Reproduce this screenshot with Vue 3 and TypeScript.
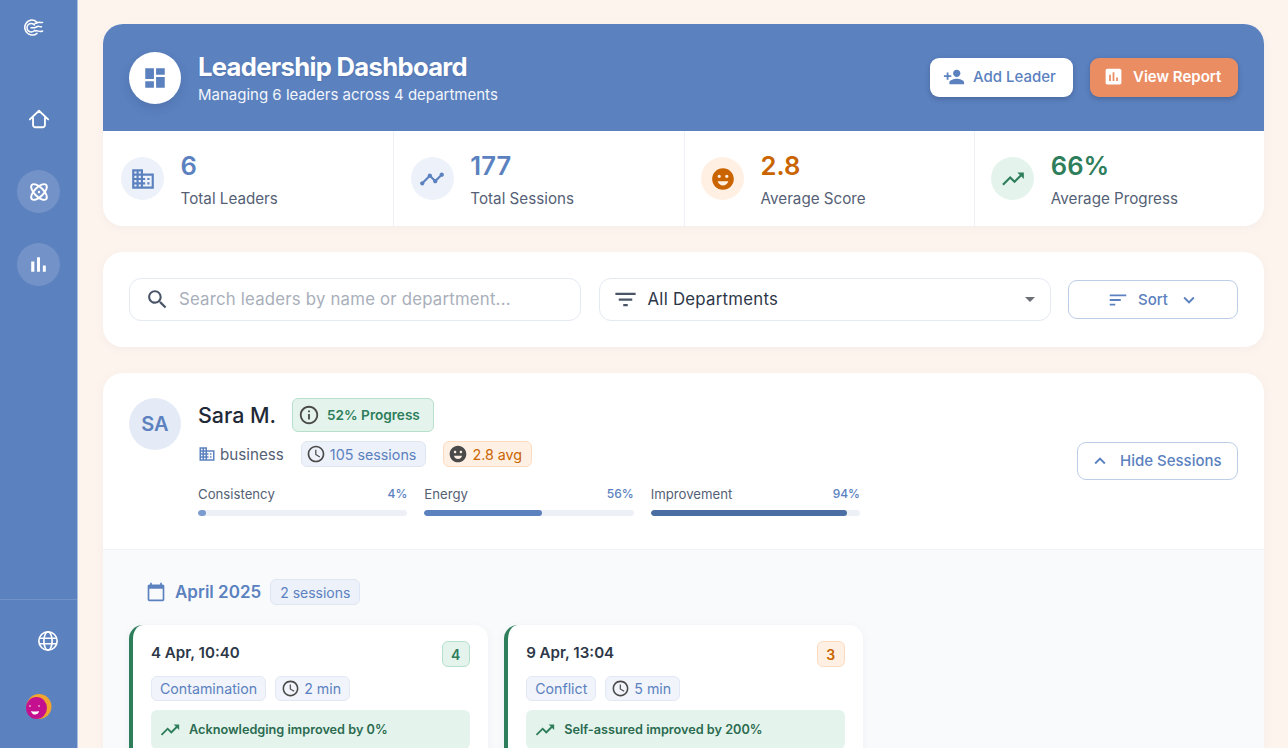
<script setup lang="ts">
const I = {
  dashboard: 'M3 13h8V3H3v10zm0 8h8v-6H3v6zm10 0h8V11h-8v10zm0-18v6h8V3h-8z',
  business: 'M12 7V3H2v18h20V7H12zM6 19H4v-2h2v2zm0-4H4v-2h2v2zm0-4H4V9h2v2zm0-4H4V5h2v2zm4 12H8v-2h2v2zm0-4H8v-2h2v2zm0-4H8V9h2v2zm0-4H8V5h2v2zm10 12h-8v-2h2v-2h-2v-2h2v-2h-2V9h8v10zm-2-8h-2v2h2v-2zm0 4h-2v2h2v-2z',
  timeline: 'M23 8c0 1.1-.9 2-2 2-.18 0-.35-.02-.51-.07l-3.56 3.55c.05.16.07.34.07.52 0 1.1-.9 2-2 2s-2-.9-2-2c0-.18.02-.36.07-.52l-2.55-2.55c-.16.05-.34.07-.52.07s-.36-.02-.52-.07l-4.55 4.56c.05.16.07.33.07.51 0 1.1-.9 2-2 2s-2-.9-2-2 .9-2 2-2c.18 0 .35.02.51.07l4.56-4.55C8.02 9.36 8 9.18 8 9c0-1.1.9-2 2-2s2 .9 2 2c0 .18-.02.36-.07.52l2.55 2.55c.16-.05.34-.07.52-.07s.36.02.52.07l3.55-3.56C19.02 8.35 19 8.18 19 8c0-1.1.9-2 2-2s2 .9 2 2z',
  mood: 'M11.99 2C6.47 2 2 6.48 2 12s4.47 10 9.99 10C17.52 22 22 17.52 22 12S17.52 2 11.99 2zM8.5 8c.83 0 1.5.67 1.5 1.5S9.33 11 8.5 11 7 10.33 7 9.5 7.67 8 8.5 8zM12 18c-2.28 0-4.22-1.66-5-4h10c-.78 2.34-2.72 4-5 4zm3.5-7c-.83 0-1.5-.67-1.5-1.5S14.67 8 15.5 8s1.5.67 1.5 1.5-.67 1.5-1.5 1.5z',
  trend: 'M16 6l2.29 2.29-4.88 4.88-4-4L2 16.59 3.41 18l6-6 4 4 6.3-6.29L22 12V6z',
  personAdd: 'M15 12c2.21 0 4-1.79 4-4s-1.79-4-4-4-4 1.79-4 4 1.79 4 4 4zm-9-2V7H4v3H1v2h3v3h2v-3h3v-2H6zm9 4c-2.67 0-8 1.34-8 4v2h16v-2c0-2.66-5.33-4-8-4z',
  assessment: 'M19 3H5c-1.1 0-2 .9-2 2v14c0 1.1.9 2 2 2h14c1.1 0 2-.9 2-2V5c0-1.1-.9-2-2-2zM9 17H7v-7h2v7zm4 0h-2V7h2v10zm4 0h-2v-4h2v4z',
  search: 'M15.5 14h-.79l-.28-.27C15.41 12.59 16 11.11 16 9.5 16 5.91 13.09 3 9.5 3S3 5.91 3 9.5 5.91 16 9.5 16c1.61 0 3.09-.59 4.23-1.57l.27.28v.79l5 4.99L20.49 19l-4.99-5zm-6 0C7.01 14 5 11.99 5 9.5S7.01 5 9.5 5 14 7.01 14 9.5 11.99 14 9.5 14z',
  filter: 'M10 18h4v-2h-4v2zM3 6v2h18V6H3zm3 7h12v-2H6v2z',
  sort: 'M3 18h6v-2H3v2zM3 6v2h18V6H3zm0 7h12v-2H3v2z',
  more: 'M16.59 8.59L12 13.17 7.41 8.59 6 10l6 6 6-6z',
  less: 'M12 8l-6 6 1.41 1.41L12 10.83l4.59 4.58L18 14z',
  info: 'M11 7h2v2h-2zm0 4h2v6h-2zm1-9C6.48 2 2 6.48 2 12s4.48 10 10 10 10-4.48 10-10S17.52 2 12 2zm0 18c-4.41 0-8-3.59-8-8s3.59-8 8-8 8 3.59 8 8-3.59 8-8 8z',
  clock: 'M11.99 2C6.47 2 2 6.48 2 12s4.47 10 9.99 10C17.52 22 22 17.52 22 12S17.52 2 11.99 2zM12 20c-4.42 0-8-3.58-8-8s3.58-8 8-8 8 3.58 8 8-3.58 8-8 8zm.5-13H11v6l5.25 3.15.75-1.23-4.5-2.67z',
  calendar: 'M20 3h-1V1h-2v2H7V1H5v2H4c-1.1 0-2 .9-2 2v16c0 1.1.9 2 2 2h16c1.1 0 2-.9 2-2V5c0-1.1-.9-2-2-2zm0 18H4V8h16v13z',
  bars: 'M5 9.2h3V19H5zM10.6 5h2.8v14h-2.8zm5.6 8H19v6h-2.8z',
}

const stats = [
  { value: '6', label: 'Total Leaders', icon: I.business, tone: 'blue' },
  { value: '177', label: 'Total Sessions', icon: I.timeline, tone: 'blue' },
  { value: '2.8', label: 'Average Score', icon: I.mood, tone: 'orange' },
  { value: '66%', label: 'Average Progress', icon: I.trend, tone: 'green' },
]

const metrics = [
  { label: 'Consistency', value: 4, color: '#7c9ccf' },
  { label: 'Energy', value: 56, color: '#5b81bf' },
  { label: 'Improvement', value: 94, color: '#4a6ea3' },
]

const sessions = [
  { date: '4 Apr, 10:40', score: 4, tone: 'green', topic: 'Contamination', time: '2 min', note: 'Acknowledging improved by 0%' },
  { date: '9 Apr, 13:04', score: 3, tone: 'orange', topic: 'Conflict', time: '5 min', note: 'Self-assured improved by 200%' },
]
</script>

<template>
  <div class="app">
    <aside class="sidebar">
      <svg class="logo" viewBox="0 0 22 18" fill="none" stroke="#fff" stroke-width="1.5" stroke-linecap="round">
        <path d="M14 3.2A7.6 7.6 0 0 0 8.5 1 7.5 7.5 0 1 0 14 14.3" />
        <path d="M11.6 6A4.3 4.3 0 1 0 11.6 11.4" />
        <path d="M8 8.7h3.5c1.5 0 2.2-1.4 3.7-1.4s2 .8 3.3.4" />
        <path d="M12 4.2c1.500.6 2.400-1 4-1 1.400 0 2 .8 3.600.2" />
        <path d="M12 12c1.500-.6 2.400-.3 3.500.1 1.600.6 2.600.6 4.100-.1" />
      </svg>
      <nav class="nav">
        <span class="nav-item">
          <svg class="home" viewBox="0 0 24 24" fill="none" stroke="#fff" stroke-width="2" stroke-linejoin="round" stroke-linecap="round">
            <path d="M2 12.500 12 3l10 9.500M5.500 10.500V18.500a2.500 2.500 0 0 0 2.500 2.500h8a2.500 2.500 0 0 0 2.500-2.500v-8" />
          </svg>
        </span>
        <span class="nav-item active">
          <svg class="atom" viewBox="0 0 24 24" fill="none" stroke="#fff" stroke-width="2.1">
            <ellipse cx="12" cy="12" rx="11" ry="5" transform="rotate(45 12 12)" />
            <ellipse cx="12" cy="12" rx="11" ry="5" transform="rotate(-45 12 12)" />
            <circle cx="12" cy="12" r="1.300" fill="#fff" stroke="none" />
          </svg>
        </span>
        <span class="nav-item active">
          <svg class="bars" viewBox="0 0 24 24" fill="#fff"><path :d="I.bars" /></svg>
        </span>
      </nav>
      <div class="side-foot">
        <svg class="globe" viewBox="0 0 24 24" fill="none" stroke="#fff" stroke-width="1.800">
          <circle cx="12" cy="12" r="10" />
          <ellipse cx="12" cy="12" rx="4.500" ry="10" />
          <path d="M2.500 9h19M2.500 15h19" />
        </svg>
        <svg class="user" viewBox="0 0 26 26">
          <circle cx="13" cy="12.500" r="12.500" fill="#f2a52e" />
          <ellipse cx="10.500" cy="14" rx="10.500" ry="11" fill="#c4108e" />
          <circle cx="4" cy="12" r="0.800" fill="#fff" />
          <circle cx="13" cy="12" r="0.800" fill="#fff" />
          <path d="M5 17c2.500.8 5 .8 8 0-.6 4.600-7 5-8 0z" fill="#fff" />
        </svg>
      </div>
    </aside>

    <main class="main">
      <section class="overview">
        <header class="banner">
          <div class="banner-left">
            <span class="banner-icon">
              <svg viewBox="0 0 24 24" fill="#5b81bf"><path :d="I.dashboard" /></svg>
            </span>
            <div>
              <h1>Leadership Dashboard</h1>
              <p>Managing 6 leaders across 4 departments</p>
            </div>
          </div>
          <div class="banner-actions">
            <button class="btn-white">
              <svg viewBox="0 0 24 24" fill="#5b81bf"><path :d="I.personAdd" /></svg>
              Add Leader
            </button>
            <button class="btn-orange">
              <svg viewBox="0 0 24 24" fill="#fff"><path :d="I.assessment" /></svg>
              View Report
            </button>
          </div>
        </header>
        <div class="stats">
          <div v-for="s in stats" :key="s.label" class="stat" :class="s.tone">
            <span class="stat-icon">
              <svg viewBox="0 0 24 24" fill="currentColor"><path :d="s.icon" /></svg>
            </span>
            <div>
              <div class="stat-value">{{ s.value }}</div>
              <div class="stat-label">{{ s.label }}</div>
            </div>
          </div>
        </div>
      </section>

      <section class="filters">
        <div class="field search-field">
          <svg viewBox="0 0 24 24" fill="#4a5568"><path :d="I.search" /></svg>
          <span class="placeholder">Search leaders by name or department...</span>
        </div>
        <div class="field select-field">
          <svg viewBox="0 0 24 24" fill="#4a5568"><path :d="I.filter" /></svg>
          <span class="select-value">All Departments</span>
          <span class="caret"></span>
        </div>
        <button class="btn-outline sort">
          <svg viewBox="0 0 24 24" fill="#5b81bf" class="i22"><path :d="I.sort" /></svg>
          Sort
          <svg viewBox="0 0 24 24" fill="#5b81bf" class="i22 chev"><path :d="I.more" /></svg>
        </button>
      </section>

      <section class="leader">
        <div class="leader-head">
          <span class="avatar">SA</span>
          <div class="leader-info">
            <div class="name-row">
              <h2>Sara M.</h2>
              <span class="progress-badge">
                <svg viewBox="0 0 24 24" fill="#4a4a4a"><path :d="I.info" /></svg>
                52% Progress
              </span>
            </div>
            <div class="meta-row">
              <span class="dept">
                <svg viewBox="0 0 24 24" fill="#5b81bf"><path :d="I.business" /></svg>
                business
              </span>
              <span class="chip chip-blue">
                <svg viewBox="0 0 24 24" fill="#4a4a4a"><path :d="I.clock" /></svg>
                105 sessions
              </span>
              <span class="chip chip-orange">
                <svg viewBox="0 0 24 24" fill="#4a4a4a"><path :d="I.mood" /></svg>
                2.8 avg
              </span>
            </div>
            <div class="metrics">
              <div v-for="m in metrics" :key="m.label" class="metric">
                <div class="metric-top">
                  <span>{{ m.label }}</span>
                  <b>{{ m.value }}%</b>
                </div>
                <div class="track">
                  <div class="fill" :style="{ width: m.value + '%', background: m.color }"></div>
                </div>
              </div>
            </div>
          </div>
          <button class="btn-outline hide">
            <svg viewBox="0 0 24 24" fill="#5b81bf" class="i22"><path :d="I.less" /></svg>
            Hide Sessions
          </button>
        </div>

        <div class="sessions">
          <div class="month">
            <svg viewBox="0 0 24 24" fill="#5b81bf"><path :d="I.calendar" /></svg>
            <span class="month-name">April 2025</span>
            <span class="month-count">2 sessions</span>
          </div>
          <div class="session-grid">
            <article v-for="s in sessions" :key="s.date" class="session">
              <div class="session-top">
                <span class="session-date">{{ s.date }}</span>
                <span class="score" :class="s.tone">{{ s.score }}</span>
              </div>
              <div class="session-tags">
                <span class="tag">{{ s.topic }}</span>
                <span class="tag">
                  <svg viewBox="0 0 24 24" fill="#4a4a4a"><path :d="I.clock" /></svg>
                  {{ s.time }}
                </span>
              </div>
              <div class="note">
                <svg viewBox="0 0 24 24" fill="#2e7d5b"><path :d="I.trend" /></svg>
                {{ s.note }}
              </div>
            </article>
          </div>
        </div>
      </section>
    </main>
  </div>
</template>

<style>
html, body { margin: 0; height: 100%; overflow: hidden; }
</style>

<style scoped>
* { box-sizing: border-box; }
.app {
  display: flex;
  height: 748px;
  overflow: hidden;
  background: #fdf4ee;
  font-family: Inter, "Liberation Sans", sans-serif;
  color: #2d3748;
}
svg { display: block; flex: none; }
button { font-family: inherit; cursor: pointer; }

.sidebar {
  flex: none;
  width: 78px;
  background: #5b81bf;
  border-right: 1px solid #a9bfdf;
  display: flex;
  flex-direction: column;
}
.logo { width: 22px; height: 18px; margin: 19px 0 0 23px; }
.nav {
  flex: 1;
  display: flex;
  flex-direction: column;
  gap: 30px;
  margin-top: 60px;
  padding-left: 17px;
}
.nav-item {
  width: 43px;
  height: 43px;
  border-radius: 50%;
  display: flex;
  align-items: center;
  justify-content: center;
}
.nav-item.active { background: rgba(255, 255, 255, 0.15); }
.home { width: 22px; height: 22px; }
.atom { width: 22px; height: 22px; }
.bars { width: 25px; height: 25px; }
.side-foot {
  height: 149px;
  border-top: 1px solid rgba(255, 255, 255, 0.14);
  padding: 30px 0 0 37px;
}
.globe { width: 22px; height: 22px; }
.user { width: 26px; height: 26px; margin: 42px 0 0 -11px; }

.main {
  flex: 1;
  min-width: 0;
  padding: 24px 24px 0 25px;
  display: flex;
  flex-direction: column;
  gap: 26px;
}
.overview, .filters, .leader {
  background: #fff;
  border-radius: 20px;
  box-shadow: 0 2px 10px rgba(90, 100, 130, 0.05);
  flex: none;
}
.overview { overflow: hidden; }
.banner {
  height: 107px;
  background: #5b81bf;
  padding: 0 26px;
  display: flex;
  align-items: center;
  justify-content: space-between;
  color: #fff;
}
.banner-left { display: flex; align-items: center; gap: 17px; }
.banner-icon {
  width: 52px;
  height: 52px;
  border-radius: 50%;
  background: #fff;
  display: flex;
  align-items: center;
  justify-content: center;
  box-shadow: 0 4px 10px rgba(40, 60, 100, 0.18);
}
.banner-icon svg { width: 26px; height: 26px; }
h1 {
  margin: 0;
  font-size: 25.6px;
  line-height: 32px;
  font-weight: 700;
  letter-spacing: -0.68px;
  text-shadow: 0 1px 2px rgba(30, 40, 70, 0.15);
}
.banner p { margin: 3px 0 0; font-size: 15px; line-height: 18px; color: #f2f5fb; }
.banner-actions { display: flex; gap: 17px; }
.btn-white, .btn-orange {
  height: 39px;
  border: none;
  border-radius: 9px;
  display: flex;
  align-items: center;
  gap: 8px;
  font-size: 15px;
  font-weight: 500;
  box-shadow: 0 2px 5px rgba(30, 40, 70, 0.28);
}
.btn-white { width: 143px; padding: 0 0 2px 13px; background: #fff; color: #5b81bf; }
.btn-white svg { width: 22px; height: 22px; }
.btn-orange { width: 148px; padding: 0 0 2px 13px; background: #ea8d63; color: #fff; gap: 9px; font-weight: 600; }
.btn-orange svg { width: 21px; height: 21px; }

.stats { display: grid; grid-template-columns: repeat(4, 1fr); height: 95px; }
.stat {
  display: flex;
  align-items: center;
  gap: 16.6px;
  padding: 0 18px 0 16.5px;
  border-left: 1px solid #edf0f4;
}
.stat:first-child { border-left: none; padding-left: 18px; }
.stat-icon {
  width: 43px;
  height: 43px;
  border-radius: 50%;
  display: flex;
  align-items: center;
  justify-content: center;
}
.stat-icon svg { width: 26px; height: 26px; }
.stat.blue .stat-icon { background: #edf1f9; color: #5b81bf; }
.stat.orange .stat-icon { background: #fff0e3; color: #c96400; }
.stat.green .stat-icon { background: #e4f4ec; color: #2e7d5b; }
.stat-value { font-size: 25.6px; line-height: 32px; font-weight: 600; }
.stat.blue .stat-value { color: #5b81bf; }
.stat.orange .stat-value { color: #c96400; }
.stat.green .stat-value { color: #2e7d5b; }
.stat-label { margin-top: 8px; font-size: 15.2px; line-height: 18px; color: #555f75; }

.filters {
  height: 95px;
  padding: 26px 26px 0;
  display: grid;
  grid-template-columns: 1fr 1fr 170px;
  gap: 17.5px;
  align-items: start;
}
.field {
  height: 42.5px;
  border: 1px solid #e4e9f2;
  border-radius: 12px;
  display: flex;
  align-items: center;
  gap: 9px;
}
.search-field { padding: 0 16px 0 15px; }
.search-field svg { width: 25px; height: 25px; }
.select-field { padding: 0 16px 0 12px; }
.select-field svg { width: 27px; height: 27px; }
.placeholder { color: #a9afbb; font-size: 16.8px; letter-spacing: 0.2px; padding-bottom: 1px; }
.select-value { flex: 1; color: #2d3748; font-size: 16.8px; letter-spacing: 0.25px; padding-bottom: 1px; }
.caret {
  width: 0;
  height: 0;
  border-left: 5px solid transparent;
  border-right: 5px solid transparent;
  border-top: 5px solid #6b6f76;
  margin-right: -1px;
}
.btn-outline {
  background: #fff;
  border: 1px solid #bccde6;
  border-radius: 9px;
  color: #5b81bf;
  font-size: 15px;
  font-weight: 500;
  display: flex;
  align-items: center;
  justify-content: flex-start;
}
.i22 { width: 22px; height: 22px; }
.sort { height: 39px; gap: 9px; padding: 0 0 0 38px; margin-top: 2px; }
.sort .chev { margin-left: 1px; }

.leader { overflow: hidden; height: 420px; }
.leader-head {
  height: 176px;
  padding: 25px 26px 0;
  display: flex;
  align-items: flex-start;
}
.avatar {
  width: 52px;
  height: 52px;
  border-radius: 50%;
  background: #e5ebf6;
  color: #5b81bf;
  font-size: 20px;
  font-weight: 600;
  display: flex;
  align-items: center;
  justify-content: center;
  flex: none;
}
.leader-info { margin-left: 17px; width: 662px; }
.name-row { display: flex; align-items: center; gap: 16px; height: 34px; }
h2 { margin: 0; font-size: 21.4px; font-weight: 500; color: #1f2937; }
.progress-badge {
  height: 34px;
  padding: 0 13px 0 5px;
  background: #e4f4ec;
  border: 1px solid #b6e0cb;
  border-radius: 6px;
  color: #2e7d5b;
  font-size: 13.6px;
  font-weight: 600;
  display: flex;
  align-items: center;
  gap: 7px;
}
.progress-badge svg { width: 22px; height: 22px; }
.meta-row { display: flex; align-items: center; margin-top: 9px; height: 26px; }
.dept { display: flex; align-items: center; gap: 4px; font-size: 15.2px; color: #555f75; margin-right: 17px; }
.dept svg { width: 18px; height: 18px; }
.chip {
  height: 26px;
  border-radius: 6px;
  display: flex;
  align-items: center;
  gap: 4px;
  padding: 0 9px 0 4px;
  font-size: 14.3px;
  margin-right: 17px;
}
.chip svg { width: 20px; height: 20px; }
.chip-blue { background: #edf1f9; border: 1px solid #dfe6f3; color: #5b81bf; }
.chip-orange { background: #fff0e3; border: 1px solid #fbdcc2; color: #c96400; }
.metrics { display: grid; grid-template-columns: repeat(3, 1fr); gap: 17px; margin-top: 19px; }
.metric-top { display: flex; justify-content: space-between; font-size: 13.2px; line-height: 16px; color: #555f75; }
.metric-top b { color: #5b81bf; font-weight: 500; font-size: 12px; }
.track { margin-top: 8px; height: 6px; border-radius: 3px; background: #edf1f7; overflow: hidden; }
.fill { height: 100%; border-radius: 3px; }
.hide {
  margin: 44px 0 0 auto;
  width: 161px;
  height: 38px;
  gap: 9px;
  padding: 0 0 1px 11px;
}

.sessions { background: #f9fafc; padding: 29px 26px 0; height: 244px; border-top: 1px solid #f1f3f6; }
.month { display: flex; align-items: center; padding-left: 17px; height: 26px; }
.month svg { width: 20px; height: 20px; margin-right: 9px; }
.month-name { font-size: 17px; font-weight: 600; color: #5b81bf; margin-right: 9px; }
.month-count {
  height: 26px;
  padding: 0 9px;
  display: flex;
  align-items: center;
  background: #edf1f9;
  border: 1px solid #dfe6f3;
  border-radius: 6px;
  font-size: 14px;
  color: #5b81bf;
}
.session-grid { display: grid; grid-template-columns: repeat(3, 1fr); gap: 16.5px; margin-top: 20px; }
.session {
  height: 160px;
  background: #fff;
  border-left: 4px solid #2e7d5b;
  border-radius: 14px;
  padding: 16px 18px;
  box-shadow: 0 2px 8px rgba(90, 100, 130, 0.07);
}
.session-top { display: flex; justify-content: space-between; align-items: flex-start; height: 35px; }
.session-date { font-size: 15.1px; font-weight: 600; color: #2d3748; line-height: 24px; }
.score {
  width: 28px;
  height: 26px;
  border-radius: 6px;
  font-size: 14px;
  font-weight: 600;
  display: flex;
  align-items: center;
  justify-content: center;
}
.score.green { background: #e4f4ec; border: 1px solid #b6e0cb; color: #2e7d5b; }
.score.orange { background: #fff0e3; border: 1px solid #fbdcc2; color: #c96400; }
.session-tags { display: flex; gap: 9px; }
.tag {
  height: 25px;
  padding: 0 8px;
  display: flex;
  align-items: center;
  gap: 4px;
  background: #f1f4fa;
  border: 1px solid #e3e9f4;
  border-radius: 6px;
  font-size: 14.2px;
  color: #5b81bf;
}
.tag svg { width: 19px; height: 19px; margin-left: -3px; }
.note {
  margin-top: 9px;
  height: 39px;
  padding: 0 8px;
  display: flex;
  align-items: center;
  gap: 8px;
  background: #e4f4ec;
  border-radius: 6px;
  font-size: 12.7px;
  font-weight: 600;
  color: #2b6b50;
}
.note svg { width: 22px; height: 22px; }
</style>
